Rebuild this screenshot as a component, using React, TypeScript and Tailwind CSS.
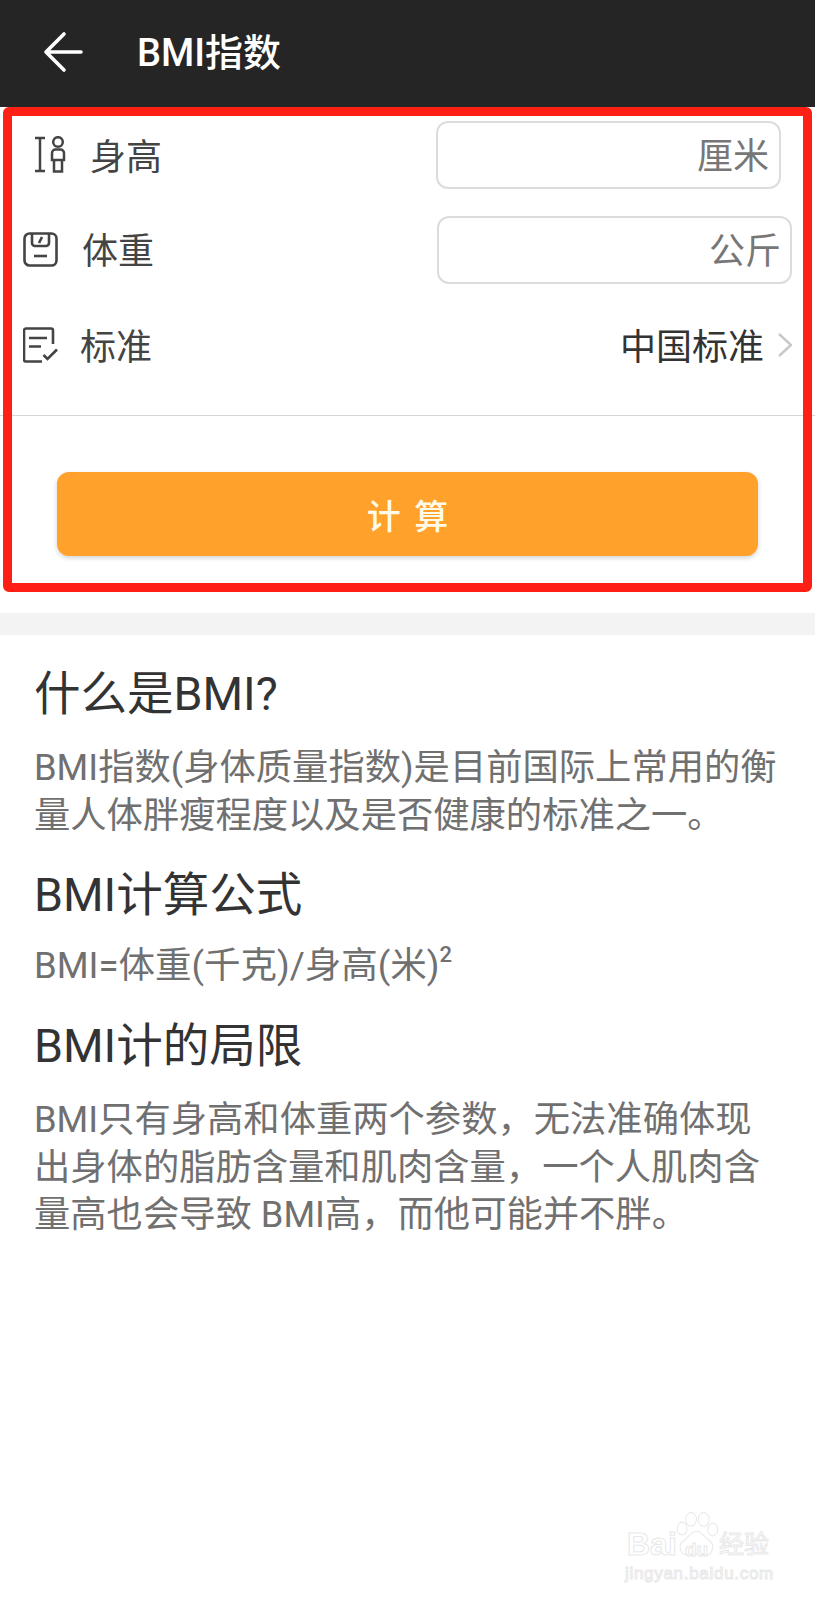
const stack = "font-['Roboto','Noto_Sans_CJK_SC','Noto_Sans',sans-serif]";

function HeightIcon() {
  return (
    <svg viewBox="0 0 33 37" className="h-[37px] w-[33px]" fill="none" stroke="#444" strokeWidth="2.5">
      <path d="M1 2h10M6 2v33M1 35h10" />
      <circle cx="24" cy="6" r="4.8" />
      <path d="M18 24v-7a3.5 3.5 0 0 1 3.5-3.5h5A3.5 3.5 0 0 1 30 17v7z" />
      <path d="M20 24v11.5h8V24" />
    </svg>
  );
}

function ScaleIcon() {
  return (
    <svg viewBox="0 0 35 35" className="h-[35px] w-[35px]" fill="none" stroke="#444" strokeWidth="2.6">
      <rect x="1.5" y="1.5" width="32" height="32" rx="5" />
      <path d="M9 2v9a3 3 0 0 0 3 3h11a3 3 0 0 0 3-3V2" />
      <path d="M16 11l3-6" />
      <path d="M11 24h13" />
    </svg>
  );
}

function ListIcon() {
  return (
    <svg viewBox="0 0 35 36" className="h-[36px] w-[35px]" fill="none" stroke="#444" strokeWidth="2.6">
      <path d="M19 34.5H3a2 2 0 0 1-2-2V3.5a2 2 0 0 1 2-2h25a2 2 0 0 1 2 2V17" />
      <path d="M6 11h18M6 19.5h12" />
      <path d="M20.5 28l4 4 9.5-9.5" />
    </svg>
  );
}

function Watermark() {
  return (
    <div className="absolute left-[624px] top-[1510px] h-[76px] w-[150px] text-white [-webkit-text-stroke:1px_#e8e8e8] font-['Liberation_Sans',sans-serif]">
      <svg viewBox="0 0 50 50" className="absolute left-[50px] top-[2px] h-[46px] w-[45px]" fill="#fff" stroke="#e8e8e8" strokeWidth="1.1" preserveAspectRatio="none">
        <ellipse cx="9" cy="18" rx="5.5" ry="7" />
        <ellipse cx="19" cy="8" rx="6" ry="7.5" />
        <ellipse cx="33" cy="8" rx="6" ry="7.5" />
        <ellipse cx="43" cy="19" rx="5.5" ry="7" />
        <path d="M25 21c6 0 8 6 14 10 7 4 4 17-5 16-4 0-6-1-9-1s-6 2-10 1c-9-1-11-12-4-16 6-4 8-10 14-10z" />
      </svg>
      <span className="absolute left-[3px] top-[18px] text-[32px] leading-none font-bold">Bai</span>
      <span className="absolute left-[61px] top-[30px] text-[19px] leading-none font-bold">du</span>
      <span className={`absolute left-[95px] top-[22px] text-[25px] leading-none ${stack}`}>经验</span>
      <span className="absolute left-[1px] top-[55px] text-[17px] leading-none tracking-[0.7px]">jingyan.baidu.com</span>
    </div>
  );
}

export default function App() {
  return (
    <div className={`relative h-[1600px] w-[815px] overflow-hidden bg-white ${stack}`}>
      <header className="flex h-[107px] items-center bg-[#252525] pl-[43px] pb-[4px] text-white">
        <svg viewBox="0 0 40 42" className="h-[42px] w-[40px]" fill="none" stroke="#fff" strokeWidth="3.6" strokeLinecap="round" strokeLinejoin="round">
          <path d="M38 21H3M21 3L3 21l18 18" />
        </svg>
        <h1 className="ml-[54px] pt-[3px] text-[38px] leading-none font-medium">BMI指数</h1>
      </header>

      <section className="relative h-[506px]">
        <div className="flex h-[95px] items-center pl-[34px] pr-[34px]">
          <HeightIcon />
          <span className="ml-[23px] pt-[6px] text-[36px] leading-none text-[#444]">身高</span>
          <div className="ml-auto flex h-[68px] w-[345px] items-center justify-end rounded-[12px] border-2 border-[#dcdcdc] pr-[10px] pt-[4px] text-[36px] text-[#777]">厘米</div>
        </div>
        <div className="flex h-[95px] items-center pl-[23px] pr-[23px]">
          <ScaleIcon />
          <span className="ml-[24px] pt-[4px] text-[36px] leading-none text-[#444]">体重</span>
          <div className="ml-auto flex h-[68px] w-[355px] items-center justify-end rounded-[12px] border-2 border-[#dcdcdc] pr-[9px] pt-[4px] text-[36px] text-[#777]">公斤</div>
        </div>
        <div className="flex h-[96px] items-center pl-[23px] pr-[23px]">
          <ListIcon />
          <span className="ml-[22px] pt-[5px] text-[36px] leading-none text-[#444]">标准</span>
          <span className="ml-auto pt-[5px] text-[36px] leading-none text-[#333]">中国标准</span>
          <svg viewBox="0 0 14 24" className="ml-[14px] h-[24px] w-[14px]" fill="none" stroke="#c8c8c8" strokeWidth="2.4">
            <path d="M1 1l12 11L1 23" />
          </svg>
        </div>
        <div className="mt-[22px] h-[1px] bg-[#d6d6d6]" />
        <button className="mx-auto mt-[56px] flex h-[84px] w-[701px] items-center justify-center rounded-[12px] bg-[#ffa12b] pt-[6px] text-[34px] font-medium text-[#fffbe8] [word-spacing:5px] shadow-[0_2px_5px_rgba(0,0,0,0.18)]">
          计 算
        </button>
        <div className="pointer-events-none absolute inset-x-[3px] top-0 bottom-[21px] rounded-[6px] border-[9px] border-[#ff2015]" />
      </section>

      <div className="h-[22px] bg-[#f3f3f3]" />

      <article className="pl-[34px] pr-[35px] pt-[29px]">
        <h2 className="text-[46.5px] leading-[60px] text-[#333]">什么是BMI?</h2>
        <p className="mt-[20px] text-[36.3px] leading-[47.5px] text-[#707070]">BMI指数(身体质量指数)是目前国际上常用的衡量人体胖瘦程度以及是否健康的标准之一。</p>
        <h2 className="mt-[26px] text-[46.5px] leading-[60px] text-[#333]">BMI计算公式</h2>
        <p className="mt-[17px] text-[36.5px] leading-[48px] text-[#707070]">BMI=体重(千克)/身高(米)<span className="align-[16px] text-[22px] font-medium leading-none">2</span></p>
        <h2 className="mt-[26px] text-[46.5px] leading-[60px] text-[#333]">BMI计的局限</h2>
        <p className="mt-[20px] text-[36.3px] leading-[47.5px] text-[#707070]">BMI只有身高和体重两个参数，无法准确体现出身体的脂肪含量和肌肉含量，一个人肌肉含量高也会导致 BMI高，而他可能并不胖。</p>
      </article>

      <Watermark />
    </div>
  );
}
